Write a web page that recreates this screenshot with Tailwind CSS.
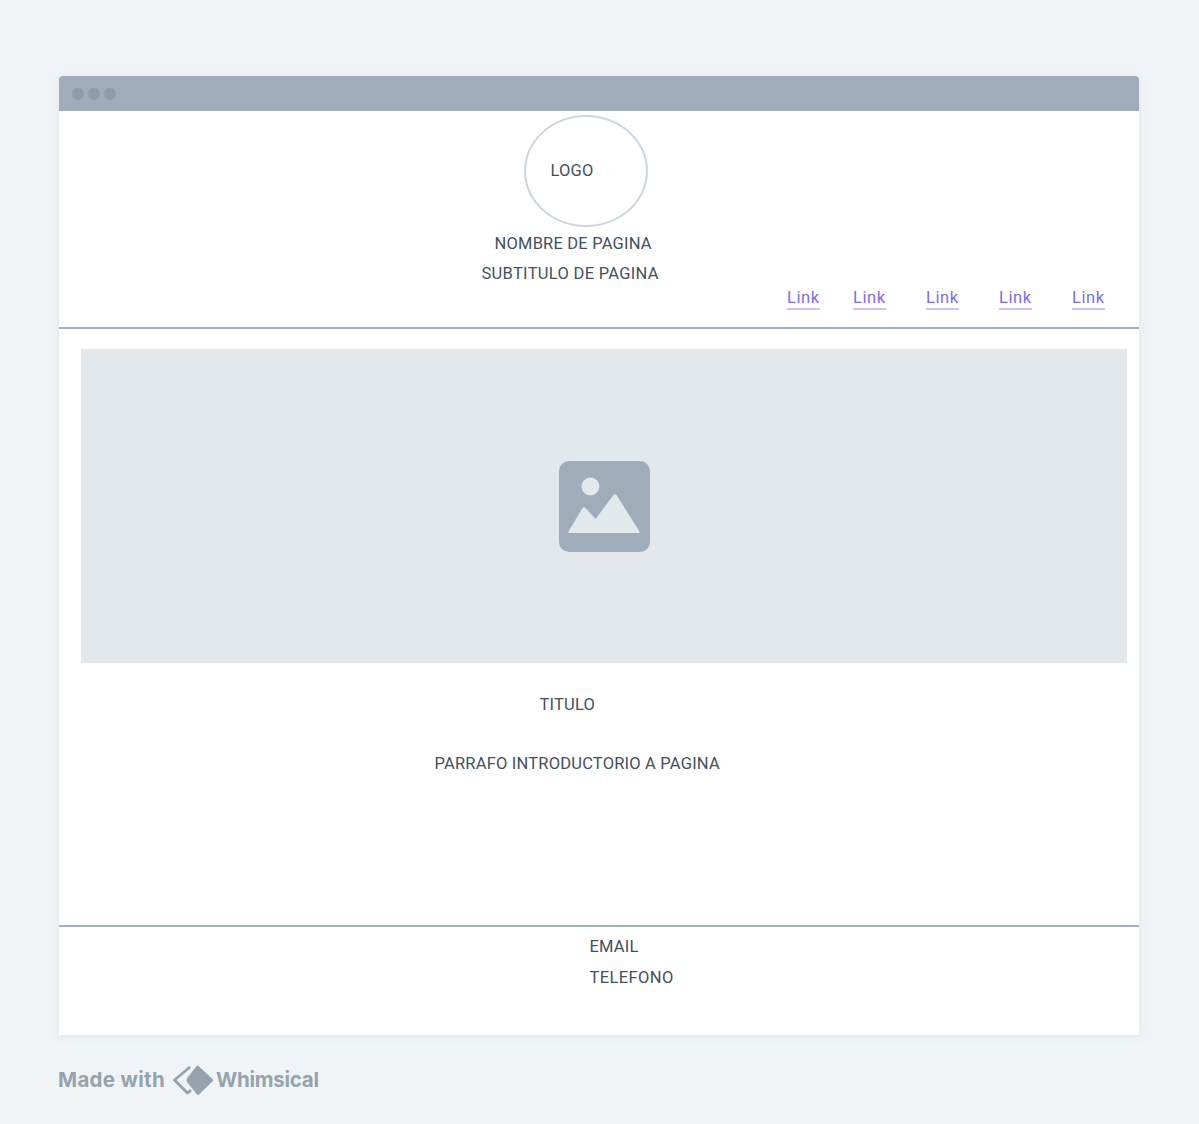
<!doctype html>
<html><head><meta charset="utf-8"><script src="https://cdn.jsdelivr.net/npm/@tailwindcss/browser@4"></script></head>
<body class="bg-[#f0f4f7] h-[1124px] w-[1199px] overflow-hidden font-['Roboto',sans-serif] text-[#435060]">
<div class="pt-[76px] pl-[59px]">
  <div class="w-[1080px] h-[959px] bg-white rounded-t-[4px] shadow-[0_2px_8px_rgba(100,120,140,0.12)] flex flex-col">
    <div class="h-[35px] bg-[#9eadb9] rounded-t-[4px] flex items-center gap-[4px] pl-[13px] shrink-0">
      <span class="size-[12px] rounded-full bg-[#8c9ca9]"></span><span class="size-[12px] rounded-full bg-[#8c9ca9]"></span><span class="size-[12px] rounded-full bg-[#8c9ca9]"></span>
    </div>
    <header class="h-[218px] border-b-2 border-[#a3b1bd] relative shrink-0 font-[450] text-[16.5px] leading-[20px] tracking-[0.2px]">
      <div class="ml-[464.5px] mt-[4px] w-[124px] h-[112px] rounded-[50%] border-2 border-[#ccd6df] flex items-center pl-[25px]">LOGO</div>
      <p class="ml-[435.5px] mt-[7px] whitespace-nowrap">NOMBRE DE PAGINA</p>
      <p class="ml-[422.5px] mt-[10px] whitespace-nowrap tracking-[0.3px]">SUBTITULO DE PAGINA</p>
      <nav class="absolute left-[728px] top-[176px] flex text-[#7b6cf6] tracking-[0.6px] font-normal">
        <a class="w-[33px] h-[23px] pt-[1px] leading-[20px] border-b-2 border-[#c9c3fb] mr-[33px]">Link</a>
        <a class="w-[33px] h-[23px] pt-[1px] leading-[20px] border-b-2 border-[#c9c3fb] mr-[40px]">Link</a>
        <a class="w-[33px] h-[23px] pt-[1px] leading-[20px] border-b-2 border-[#c9c3fb] mr-[40px]">Link</a>
        <a class="w-[33px] h-[23px] pt-[1px] leading-[20px] border-b-2 border-[#c9c3fb] mr-[40px]">Link</a>
        <a class="w-[33px] h-[23px] pt-[1px] leading-[20px] border-b-2 border-[#c9c3fb]">Link</a>
      </nav>
    </header>
    <main class="h-[596px] shrink-0 pt-[20px] font-[450] text-[16.5px] leading-[20px] tracking-[0.2px]">
      <div class="ml-[22px] w-[1046px] h-[314px] bg-[#e3e8ec] flex items-center justify-center">
        <svg width="92" height="92" viewBox="0 0 92 92" class="translate-x-[0.5px] translate-y-[0.5px]">
          <rect x="0.500" y="0.500" width="91" height="91" rx="10" fill="#9eadb9"/>
          <circle cx="32" cy="26" r="9" fill="#e3e8ec"/>
          <path d="M10 71 L24 47.500 Q25 46 27 47.500 L37 58.500 L55 34.500 Q56.500 33 58 34.500 L81 71 Q82 72.500 80 72.500 L11 72.500 Q9.500 72.500 10 71Z" fill="#e3e8ec"/>
        </svg>
      </div>
      <p class="ml-[480.5px] mt-[32px]">TITULO</p>
      <p class="ml-[375.5px] mt-[39px] whitespace-nowrap">PARRAFO INTRODUCTORIO A PAGINA</p>
    </main>
    <footer class="border-t-2 border-[#a3b1bd] pt-[10px] pl-[530.5px] font-[450] text-[16.5px] leading-[20px] tracking-[0.2px]">
      <p>EMAIL</p>
      <p class="mt-[11px] tracking-[0.4px]">TELEFONO</p>
    </footer>
  </div>
  <div class="flex items-center mt-[29px] -ml-[1px] text-[#95a3ae] font-['Inter',sans-serif] font-bold text-[20.5px] leading-[32px]">
    <span class="w-[114px] tracking-[0.3px]">Made with</span>
    <svg width="42" height="32" viewBox="0 0 42 32" class="mr-[2px]">
      <path d="M18 3 L2.500 16 L15.500 29 L19 26" fill="none" stroke="#95a3ae" stroke-width="2.800" stroke-linejoin="round"/>
      <path d="M26.500 2 L40.500 15 Q42 16 40.500 17.500 L27 30.500 Q26 31.500 25 30.500 L15 18 Q14 16 15 14.500 L24.500 2 Q25.500 1 26.500 2Z" fill="#95a3ae"/>
    </svg>
    <span class="tracking-[-0.25px]">Whimsical</span>
  </div>
</div>
</body></html>
